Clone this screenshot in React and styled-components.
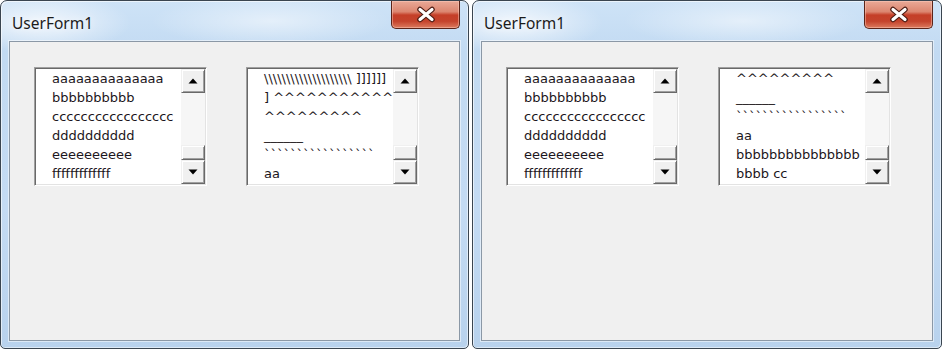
import React from "react";
import styled, { createGlobalStyle } from "styled-components";

const GlobalStyle = createGlobalStyle`
  html, body {
    margin: 0;
    padding: 0;
    background: #ffffff;
  }
`;

const Desktop = styled.div`
  display: flex;
  gap: 3px;
  width: 942px;
  height: 350px;
  overflow: hidden;
`;

const Window = styled.div`
  width: ${(props) => props.width}px;
  height: 349px;
  box-sizing: border-box;
  display: flex;
  flex-direction: column;
  padding: 0 8px 7px 8px;
  border: 1px solid #3a4550;
  border-radius: 7px 7px 5px 5px;
  background:
    radial-gradient(ellipse 90px 30px at 40px 22px, rgba(255, 255, 255, 0.75), rgba(255, 255, 255, 0)),
    radial-gradient(ellipse 120px 26px at 270px 20px, rgba(255, 255, 255, 0.5), rgba(255, 255, 255, 0)),
    linear-gradient(180deg, #cee3f7 0%, #c2daf2 15%, #c4dbf3 60%, #b8d2ed 100%);
  box-shadow: inset 1px 1px 0 rgba(255, 255, 255, 0.6), inset -1px -1px 0 rgba(255, 255, 255, 0.5);
`;

const TitleBar = styled.div`
  height: 40px;
  display: flex;
  justify-content: space-between;
  align-items: flex-start;
`;

const Title = styled.span`
  margin: 11px 0 0 3px;
  font-family: "Noto Sans", "Open Sans", sans-serif;
  font-size: 15.5px;
  color: #1b1b1b;
  text-shadow: 0 0 8px rgba(255, 255, 255, 0.9);
`;

const CloseButton = styled.div`
  width: 69px;
  height: 28px;
  box-sizing: border-box;
  display: flex;
  align-items: center;
  justify-content: center;
  border: 1px solid #5b2419;
  border-top: none;
  border-radius: 0 0 5px 5px;
  background: linear-gradient(
    180deg,
    #e9a997 0%,
    #dc8670 40%,
    #c53f28 52%,
    #c4432c 75%,
    #dc7b5f 100%
  );
  box-shadow: inset 0 0 0 1px rgba(255, 210, 195, 0.45);
`;

const Client = styled.div`
  flex: 1;
  display: flex;
  align-items: flex-start;
  gap: 39px;
  padding: 25px 0 0 24px;
  background: #f0f0f0;
  border: 1px solid #8b98a6;
  box-shadow: 0 0 0 1px rgba(255, 255, 255, 0.5);
`;

const ListBox = styled.div`
  width: 173px;
  height: 119px;
  box-sizing: border-box;
  display: flex;
  padding: 1px;
  background: #ffffff;
  border: 1px solid;
  border-color: #a0a0a0 #ffffff #ffffff #a0a0a0;
  box-shadow: inset 1px 1px 0 #696969, inset -1px -1px 0 #e3e3e3;
`;

const Items = styled.div`
  flex: 1;
  overflow: hidden;
  padding-left: 16px;
`;

const Item = styled.div`
  height: 19px;
  line-height: 19px;
  white-space: nowrap;
  font-family: "DejaVu Sans", Verdana, sans-serif;
  font-size: 13px;
  color: #1c1620;
`;

const ScrollBar = styled.div`
  width: 24px;
  display: flex;
  flex-direction: column;
`;

const ArrowButton = styled.div`
  height: 24px;
  box-sizing: border-box;
  display: flex;
  align-items: center;
  justify-content: center;
  background: #f0f0f0;
  border: 1px solid;
  border-color: #f0f0f0 #696969 #696969 #f0f0f0;
  box-shadow: inset 1px 1px 0 #ffffff, inset -1px -1px 0 #a0a0a0;
`;

const Track = styled.div`
  flex: 1;
  display: flex;
  flex-direction: column;
  justify-content: flex-end;
  background: #f6f6f6;
`;

const Thumb = styled.div`
  height: 15px;
  box-sizing: border-box;
  background: #f0f0f0;
  border: 1px solid;
  border-color: #f0f0f0 #696969 #696969 #f0f0f0;
  box-shadow: inset 1px 1px 0 #ffffff, inset -1px -1px 0 #a0a0a0;
`;

const CloseGlyph = () => (
  <svg width="22" height="17" viewBox="0 0 22 17">
    <path d="M5 3.5 L17 13.5 M17 3.5 L5 13.5" stroke="#4a1a12" strokeWidth="5.5" strokeLinecap="round" />
    <path d="M5 3.5 L17 13.5 M17 3.5 L5 13.5" stroke="#ffffff" strokeWidth="3.2" strokeLinecap="round" />
  </svg>
);

const Arrow = ({ down }) => (
  <svg width="10" height="6" viewBox="0 0 10 6">
    <path d={down ? "M0.5 0.5 L9.5 0.5 L5 5.5 Z" : "M0.5 5.5 L9.5 5.5 L5 0.5 Z"} fill="#000" />
  </svg>
);

const List = ({ rows }) => (
  <ListBox>
    <Items>
      {rows.map((row, i) => (
        <Item key={i}>{row || "\u00a0"}</Item>
      ))}
    </Items>
    <ScrollBar>
      <ArrowButton>
        <Arrow />
      </ArrowButton>
      <Track>
        <Thumb />
      </Track>
      <ArrowButton>
        <Arrow down />
      </ArrowButton>
    </ScrollBar>
  </ListBox>
);

const letters = [
  "aaaaaaaaaaaaaa",
  "bbbbbbbbbb",
  "ccccccccccccccccc",
  "dddddddddd",
  "eeeeeeeeee",
  "fffffffffffff",
];

const symbolsTop = [
  "\\\\\\\\\\\\\\\\\\\\\\\\\\\\\\\\\\\\\\\\ ]]]]]]",
  "] ^^^^^^^^^^^",
  "^^^^^^^^^",
  "______",
  "`````````````````",
  "aa",
];

const symbolsScrolled = [
  "^^^^^^^^^",
  "______",
  "`````````````````",
  "aa",
  "bbbbbbbbbbbbbbb",
  "bbbb cc",
];

const UserForm = ({ width, second }) => (
  <Window width={width}>
    <TitleBar>
      <Title>UserForm1</Title>
      <CloseButton>
        <CloseGlyph />
      </CloseButton>
    </TitleBar>
    <Client>
      <List rows={letters} />
      <List rows={second} />
    </Client>
  </Window>
);

const App = () => (
  <>
    <GlobalStyle />
    <Desktop>
      <UserForm width={469} second={symbolsTop} />
      <UserForm width={470} second={symbolsScrolled} />
    </Desktop>
  </>
);

export default App;
